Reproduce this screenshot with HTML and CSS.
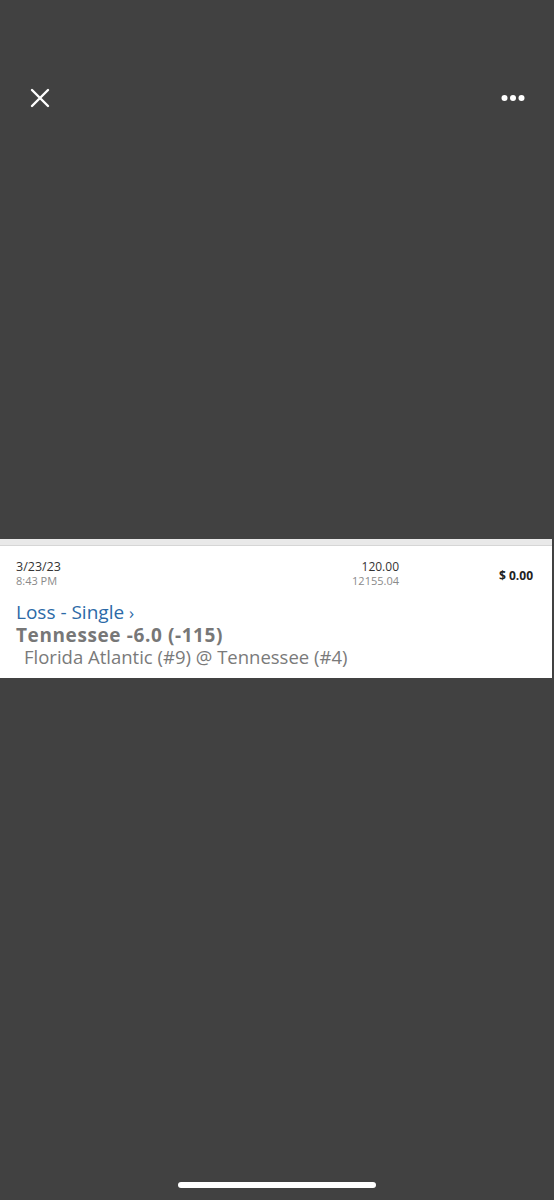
FILE: index.html
```html
<!DOCTYPE html>
<html>

<head>
  <link rel="stylesheet" href="styles.css">
</head>

<body>
  <div class="screen">
    <!-- top bar: close and more -->
    <div class="top-bar">
      <svg class="icon-close" width="20" height="20" viewBox="0 0 20 20">
        <path d="M2 2 L18 18 M18 2 L2 18" stroke="#fff" stroke-width="2.4" stroke-linecap="round" fill="none" />
      </svg>
      <svg class="icon-more" width="24" height="8" viewBox="0 0 24 8">
        <circle cx="3.5" cy="4" r="3" fill="#fff" />
        <circle cx="12" cy="4" r="3" fill="#fff" />
        <circle cx="20.5" cy="4" r="3" fill="#fff" />
      </svg>
    </div>

    <!-- bet row -->
    <div class="bet-card">
      <div class="bet-head">
        <div class="bet-date">
          <div class="date">3/23/23</div>
          <div class="time">8:43 PM</div>
        </div>
        <div class="bet-amounts">
          <div class="stake">120.00</div>
          <div class="balance">12155.04</div>
        </div>
        <div class="bet-win">$ 0.00</div>
      </div>
      <div class="bet-status">Loss - Single <span class="chev">›</span></div>
      <div class="bet-pick">Tennessee -6.0 (-115)</div>
      <div class="bet-game">Florida Atlantic (#9) @ Tennessee (#4)</div>
    </div>

    <div class="home-bar"></div>
  </div>
</body>

</html>
```

FILE: styles.css
```css
/* page */
html,
body {
  margin: 0;
  padding: 0;
  background-color: #414141;
}

.screen {
  height: 1200px;
  display: flex;
  flex-direction: column;
  font-family: "Open Sans", "Liberation Sans", sans-serif;
}

/* top bar */
.top-bar {
  display: flex;
  justify-content: space-between;
  align-items: center;
  padding: 88px 30px 0 30px;
  height: 20px;
}

.icon-more {
  margin-right: -1px;
}

/* bet card */
.bet-card {
  margin-top: 431px;
  margin-right: 2px;
  background-color: #fff;
  border-top: 6px solid #e9e9e9;
  box-shadow: inset 0 1px 0 #d6d6d6;
  padding: 15px 0 10px 16px;
}

.bet-head {
  display: flex;
  align-items: flex-start;
}

.bet-date {
  flex: 1;
}

.date {
  font-size: 12.5px;
  line-height: 14px;
  color: #333;
}

.time {
  font-size: 11px;
  line-height: 14px;
  color: #8a8a8a;
}

.bet-amounts {
  text-align: right;
  width: 120px;
}

.stake {
  font-size: 12px;
  line-height: 14px;
  color: #333;
}

.balance {
  font-size: 11px;
  line-height: 14px;
  color: #8a8a8a;
}

.bet-win {
  width: 153px;
  padding-right: 19px;
  box-sizing: border-box;
  text-align: right;
  font-size: 12px;
  font-weight: bold;
  color: #222;
  padding-top: 7px;
}

.bet-status {
  margin-top: 13px;
  font-size: 19px;
  line-height: 22px;
  color: #2c6aa7;
}

.chev {
  font-size: 17px;
}

.bet-pick {
  font-size: 19px;
  line-height: 22px;
  font-weight: bold;
  letter-spacing: 0.6px;
  color: #777;
}

.bet-game {
  padding-left: 8px;
  font-size: 18.5px;
  line-height: 22px;
  color: #7a7a7a;
}

/* home indicator */
.home-bar {
  margin: auto auto 12px auto;
  width: 198px;
  height: 6px;
  border-radius: 3px;
  background-color: #fff;
}
```
